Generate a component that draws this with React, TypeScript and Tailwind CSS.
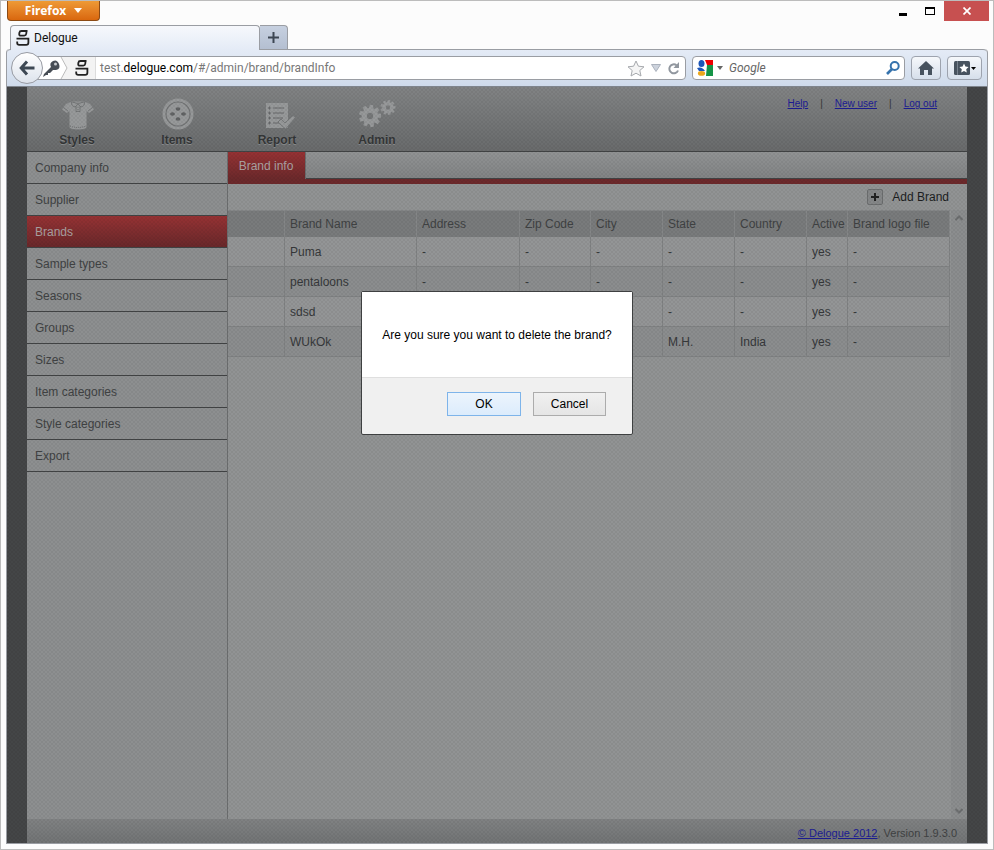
import React from "react";

const sidebarItems = [
  "Company info",
  "Supplier",
  "Brands",
  "Sample types",
  "Seasons",
  "Groups",
  "Sizes",
  "Item categories",
  "Style categories",
  "Export",
];

const columns = [
  { label: "", width: "w-[57px]" },
  { label: "Brand Name", width: "w-[132px]" },
  { label: "Address", width: "w-[103px]" },
  { label: "Zip Code", width: "w-[71px]" },
  { label: "City", width: "w-[72px]" },
  { label: "State", width: "w-[72px]" },
  { label: "Country", width: "w-[72px]" },
  { label: "Active", width: "w-[41px]" },
  { label: "Brand logo file", width: "w-[102px]" },
];

const rows = [
  ["", "Puma", "-", "-", "-", "-", "-", "yes", "-"],
  ["", "pentaloons", "-", "-", "-", "-", "-", "yes", "-"],
  ["", "sdsd", "", "", "", "-", "-", "yes", "-"],
  ["", "WUkOk", "", "", "", "M.H.", "India", "yes", "-"],
];

function DelogueMark() {
  return (
    <svg width="14" height="16" viewBox="0 0 14 16" fill="none" stroke="#222" strokeWidth="1.8">
      <path d="M11.5 1H5.5Q3.6 1 3.4 2.6L3.2 4.2Q3.2 5.6 5 5.6H8.2Q10 5.6 10.2 4L10.6 1" />
      <path d="M0.5 8.6H12.4V12.4Q12.4 14.8 10.2 14.8H3.2Q1.2 14.8 1.2 13V11.4" />
    </svg>
  );
}

function StylesIcon() {
  return (
    <svg width="32" height="30" viewBox="0 0 32 30">
      <path d="M9.5 1.5H22.5L28 4L32 9.5L27 13L24.5 11V27Q24 29.5 16 29.5T7.5 27V11L5 13L0 9.5L4 4Z" fill="#97999a" />
      <path d="M9.5 1.5Q9 6.5 13 7L16 4L19 7Q23 6.5 22.5 1.5M10 2Q16 5 22 2M1.5 7.5L6 11M30.5 7.5L26 11M14 6V11.5H18V6M16 7V8M16 9V10" fill="none" stroke="#6c6e70" strokeWidth="0.8" />
      <path d="M8 26Q16 29 24 26" fill="none" stroke="#66686a" strokeDasharray="1 1" />
    </svg>
  );
}

function ItemsIcon() {
  return (
    <svg width="32" height="32" viewBox="0 0 32 32">
      <circle cx="16" cy="16" r="15.5" fill="#97999a" />
      <circle cx="16" cy="16" r="12" fill="none" stroke="#737576" strokeWidth="1.2" />
      <g fill="#606263">
        <ellipse cx="16" cy="11" rx="2.4" ry="1.8" />
        <ellipse cx="16" cy="21" rx="2.4" ry="1.8" />
        <ellipse cx="10.5" cy="16" rx="2.4" ry="1.8" />
        <ellipse cx="21.5" cy="16" rx="2.4" ry="1.8" />
      </g>
    </svg>
  );
}

function ReportIcon() {
  return (
    <svg width="40" height="28" viewBox="-6 0 40 28">
      <path d="M2 1H24V26H2Z" fill="#97999a" />
      <path d="M4 6H7M4 11H7M4 16H7M4 21H7M5.5 4.5V7.5M5.5 9.5V12.5M5.5 14.5V17.5M5.5 19.5V22.5M9 6H20M9 11H20M9 16H19M9 21H15" stroke="#66686a" />
      <path d="M14 20L17 17L21 21L29 13.5L31.5 15.5L21.5 27Z" fill="#97999a" stroke="#6f7172" strokeWidth="0.8" />
    </svg>
  );
}

function Gear({ cx, cy, r }: { cx: number; cy: number; r: number }) {
  return (
    <g transform={`translate(${cx} ${cy}) scale(${r / 10})`}>
      <g fill="#97999a">
        {[0, 40, 80, 120, 160, 200, 240, 280, 320].map((a) => (
          <path key={a} d="M-2 -6L-1.6 -10H1.6L2 -6Z" transform={`rotate(${a + 8})`} />
        ))}
      </g>
      <circle r="5.2" fill="none" stroke="#97999a" strokeWidth="4.6" />
    </g>
  );
}

function AdminIcon() {
  return (
    <svg width="38" height="30" viewBox="0 0 38 30">
      <Gear cx={11} cy={16} r={11} />
      <Gear cx={29} cy={7.5} r={7.5} />
    </svg>
  );
}

const nav = [
  { label: "Styles", icon: <StylesIcon /> },
  { label: "Items", icon: <ItemsIcon /> },
  { label: "Report", icon: <ReportIcon /> },
  { label: "Admin", icon: <AdminIcon /> },
];

function TitleBar() {
  return (
    <div className="flex h-6 items-start justify-between pl-[6px] pr-1">
      <button className="flex h-5 w-[93px] items-center justify-center gap-2 rounded-b border border-t-0 border-[#8b4a14] bg-linear-to-b from-[#ee9a35] to-[#d9670d] font-['Noto_Sans',sans-serif] text-[12px] font-bold text-white">
        Firefox
        <svg width="8" height="5" viewBox="0 0 8 5"><path d="M0 0H8L4 5Z" fill="#fff" /></svg>
      </button>
      <div className="flex h-5">
        <button aria-label="Minimize" className="flex w-[26px] items-center justify-center pt-[6px]">
          <span className="h-[3px] w-2 bg-black" />
        </button>
        <button aria-label="Maximize" className="flex w-[28px] items-center justify-center">
          <span className="h-2 w-[10px] border border-t-2 border-black" />
        </button>
        <button aria-label="Close" className="flex w-[45px] items-center justify-center bg-[#c75050]">
          <svg width="8" height="8" viewBox="0 0 8 8" stroke="#fff" strokeWidth="1.7"><path d="M0.5 0.5L7.5 7.5M7.5 0.5L0.5 7.5" /></svg>
        </button>
      </div>
    </div>
  );
}

function TabStrip() {
  return (
    <div className="flex h-6 items-end pl-1">
      <div className="z-10 -mb-px flex h-[25px] w-[250px] items-center gap-1 rounded-t border border-b-0 border-[#9a9da3] bg-linear-to-b from-[#f6f8fc] to-[#e4ebf6] pl-[5px] font-['Roboto',sans-serif] text-[12px] text-[#111]">
        <DelogueMark />
        Delogue
      </div>
      <button aria-label="New tab" className="flex h-6 w-7 items-center justify-center rounded-tr border border-b-0 border-l-0 border-[#9a9da3] bg-linear-to-b from-[#c6d0e0] to-[#b4bfd1]">
        <svg width="11" height="11" viewBox="0 0 11 11" stroke="#3c4653" strokeWidth="2"><path d="M5.5 0V11M0 5.5H11" /></svg>
      </button>
    </div>
  );
}

function Toolbar() {
  return (
    <div className="flex h-[37px] items-center rounded-t border-t border-[#9a9da3] bg-linear-to-b from-[#e4ebf6] to-[#cfdbeb] pl-1 pr-[5px]">
      <button aria-label="Back" className="z-10 flex size-8 shrink-0 items-center justify-center rounded-full border border-[#989ba3] bg-linear-to-b from-white to-[#dde3ec]">
        <svg width="16" height="16" viewBox="0 0 16 16" fill="none" stroke="#3d4854" strokeWidth="3"><path d="M8 1.5L2.2 8L8 14.5M2 8H15.5" /></svg>
      </button>
      <div className="-ml-2 flex h-6 min-w-0 flex-1 items-center rounded-r-sm border border-[#9a9da3] bg-white">
        <div className="flex h-full w-[60px] shrink-0 items-center border-r border-[#dcdcdc] bg-[#f3f3f3]">
          <svg width="33" height="22" viewBox="0 0 33 22">
            <path d="M0 0H25L31 11L25 22H0Z" fill="#fff" />
            <path d="M25 0L31 11L25 22" fill="none" stroke="#bbb" />
            <path d="M7 20L8 17L15 10Q13 6 17 4T23 7T20 13L17 13L14 16H12V18H10Z" fill="#474d55" />
            <circle cx="19.5" cy="7" r="1.5" fill="#c9ccd0" />
          </svg>
          <span className="ml-[6px]"><DelogueMark /></span>
        </div>
        <div className="ml-1 min-w-0 flex-1 font-['Roboto',sans-serif] text-[12px] text-[#777]">
          test.<span className="text-black">delogue.com</span>/#/admin/brand/brandInfo
        </div>
        <div className="flex items-center gap-[6px] pr-[5px]">
          <svg width="18" height="17" viewBox="0 0 18 17" fill="#f5f5f5" stroke="#a6a9ad"><path d="M9 1L11.4 6.2L17 6.8L12.8 10.5L14 16L9 13.2L4 16L5.2 10.5L1 6.8L6.6 6.2Z" /></svg>
          <svg width="10" height="8" viewBox="0 0 10 8"><path d="M0.5 0.5H9.5L5 7.5Z" fill="#cdd3dd" stroke="#abb2bd" /></svg>
          <svg width="13" height="13" viewBox="0 0 13 13"><path d="M9.5 3.2A4.5 4.5 0 1 0 11 8.5" fill="none" stroke="#91979f" strokeWidth="2" /><path d="M12 0V6H6.5Z" fill="#91979f" /></svg>
        </div>
      </div>
      <div className="ml-[6px] flex h-6 w-[213px] items-center rounded-sm border border-[#9a9da3] bg-white pl-1 pr-1">
        <svg width="16" height="16" viewBox="0 0 16 16">
          <path d="M8 0H16V5H10Z" fill="#e00" />
          <path d="M10 5H16V16H9Z" fill="#159447" />
          <ellipse cx="4.5" cy="3.5" rx="3" ry="3.5" fill="#1c56b8" />
          <path d="M0 8Q5 6 8 11L2 11Z" fill="#1c56b8" />
          <ellipse cx="4.5" cy="13.4" rx="3.6" ry="2.4" fill="#eca71c" />
        </svg>
        <svg className="ml-1" width="6" height="4" viewBox="0 0 6 4"><path d="M0 0H6L3 4Z" fill="#666" /></svg>
        <input aria-label="Search" placeholder="Google" className="ml-[6px] min-w-0 flex-1 bg-transparent font-['Roboto',sans-serif] text-[12px] italic outline-none placeholder:text-[#666]" />
        <svg width="14" height="14" viewBox="0 0 14 14" fill="none" stroke="#3673ad" strokeWidth="2"><circle cx="8.7" cy="5" r="4" /><path d="M6 8L1 13" strokeWidth="2.6" /></svg>
      </div>
      <button aria-label="Home" className="ml-[6px] flex h-6 w-[30px] items-center justify-center rounded-sm border border-[#9da3ae] bg-linear-to-b from-[#f6f8fb] to-[#d6dfeb]">
        <svg width="16" height="14" viewBox="0 0 16 14" fill="#47525e"><path d="M8 0L16 7.5H14V14H10V9H6V14H2V7.5H0Z" /></svg>
      </button>
      <button aria-label="Bookmarks" className="ml-[6px] flex h-6 w-[35px] items-center justify-center gap-px rounded-sm border border-[#9da3ae] bg-linear-to-b from-[#f6f8fb] to-[#d6dfeb]">
        <svg width="16" height="14" viewBox="0 0 16 14"><rect width="16" height="14" rx="1.5" fill="#47525e" /><path d="M3.5 0V14" stroke="#77818d" /><path d="M10 2.5L11.4 5.6L14.6 6L12.2 8.2L12.8 11.5L10 9.9L7.2 11.5L7.8 8.2L5.4 6L8.6 5.6Z" fill="#fff" /></svg>
        <svg width="5" height="3" viewBox="0 0 5 3"><path d="M0 0H5L2.5 3Z" /></svg>
      </button>
    </div>
  );
}

function AppHeader() {
  return (
    <header className="flex h-[65px] items-start justify-between border-b border-[#414344] bg-linear-to-b from-[#818384] to-[#696b6c] pr-[30px]">
      <nav className="flex">
        {nav.map((item) => (
          <a key={item.label} href="#" className="flex w-[100px] flex-col items-center gap-[2px] text-[12px] font-bold leading-4 text-[#343637] [text-shadow:0_1px_0_#8a8c8d]">
            <span className="flex h-[43px] items-end justify-center pl-[2px]">{item.icon}</span>
            {item.label}
          </a>
        ))}
      </nav>
      <div className="flex gap-3 pt-[9px] text-[10px] leading-4 text-[#343637]">
        <a href="#" className="text-[#1c1c94] underline">Help</a>
        <span>|</span>
        <a href="#" className="text-[#1c1c94] underline">New user</a>
        <span>|</span>
        <a href="#" className="text-[#1c1c94] underline">Log out</a>
      </div>
    </header>
  );
}

function Sidebar() {
  return (
    <aside className="w-[201px] shrink-0 border-r border-[#6c6e6f] bg-[#8d8f90]">
      {sidebarItems.map((item) => (
        <a
          key={item}
          href="#"
          className={
            item === "Brands"
              ? "flex h-8 items-center border-b border-[#414344] bg-linear-to-b from-[#963234] to-[#69282a] pl-2 text-[#a9a0a0]"
              : "flex h-8 items-center border-b border-[#414344] pl-2 text-[#404243]"
          }
        >
          {item}
        </a>
      ))}
    </aside>
  );
}

function BrandTable() {
  return (
    <table className="table-fixed border-separate border-spacing-0 text-left text-[#36383a]">
      <thead>
        <tr className="h-[27px] bg-[#797b7c] text-[#404243]">
          {columns.map((col) => (
            <th key={col.label} className={`${col.width} whitespace-nowrap border-r border-t border-[#858788] p-0 pl-[5px] font-normal`}>
              {col.label}
            </th>
          ))}
        </tr>
      </thead>
      <tbody>
        {rows.map((row, r) => (
          <tr key={row[1]} className={r % 2 ? "h-[30px] bg-[#8b8d8e]" : "h-[30px] bg-[#939596]"}>
            {row.map((cell, c) => (
              <td key={c} className="border-b border-r border-[#808283] p-0 pl-[5px]">{cell}</td>
            ))}
          </tr>
        ))}
      </tbody>
    </table>
  );
}

function Content() {
  return (
    <main className="flex min-w-0 flex-1 flex-col bg-[#919394]">
      <div className="flex h-8 items-stretch border-b-[5px] border-[#6c292b] bg-linear-to-b from-[#919394] to-[#818384]">
        <button className="w-[78px] border-r border-[#6c6e6f] bg-linear-to-b from-[#963234] to-[#6c292b] pr-px text-[#aaa2a2]">Brand info</button>
        <div className="flex-1 border-b border-[#414344]" />
      </div>
      <div className="flex h-[26px] items-center justify-end pr-[18px]">
        <button className="flex items-center gap-[9px] text-[#1c1e1f]">
          <span className="flex size-4 items-center justify-center rounded-xs border border-[#6c6e6f] bg-[#858788]">
            <svg width="8" height="8" viewBox="0 0 8 8" stroke="#222" strokeWidth="2"><path d="M4 0V8M0 4H8" /></svg>
          </span>
          Add Brand
        </button>
      </div>
      <div className="flex flex-1 items-stretch justify-between">
        <div><BrandTable /></div>
        <div className="flex w-4 flex-col items-center justify-between bg-[#8b8d8e] py-[5px]">
          <svg width="8" height="6" viewBox="0 0 8 6" fill="none" stroke="#6d6f70" strokeWidth="2"><path d="M0.5 5L4 1.5L7.5 5" /></svg>
          <svg width="8" height="6" viewBox="0 0 8 6" fill="none" stroke="#6d6f70" strokeWidth="2"><path d="M0.5 1L4 4.5L7.5 1" /></svg>
        </div>
      </div>
    </main>
  );
}

function ConfirmDialog() {
  return (
    <div role="dialog" aria-label="Delete brand" className="absolute left-1/2 top-[204px] h-36 w-[272px] -translate-x-1/2 rounded-xs border border-[#3e4041] bg-[#f0f0f0] text-black">
      <div className="flex h-[86px] items-center justify-center whitespace-nowrap border-b border-[#dfdfdf] bg-white">
        Are you sure you want to delete the brand?
      </div>
      <div className="flex justify-end gap-3 pr-[26px] pt-[14px]">
        <button className="h-6 w-[74px] border border-[#7eb4ea] bg-linear-to-b from-[#ecf4fc] to-[#dcecfc]">OK</button>
        <button className="h-6 w-[73px] border border-[#acacac] bg-linear-to-b from-[#f0f0f0] to-[#e5e5e5]">Cancel</button>
      </div>
    </div>
  );
}

export default function App() {
  return (
    <div className="flex h-screen flex-col border border-[#bcbcbc] bg-[#fcfcfc]">
      <TitleBar />
      <div className="flex min-h-0 flex-1 flex-col px-[5px] pb-[5px]">
        <TabStrip />
        <div className="flex min-h-0 flex-1 flex-col rounded-t border border-t-0 border-[#9a9da3]">
          <Toolbar />
          <div className="relative flex min-h-0 flex-1 flex-col border-t border-[#7f858d] bg-[#444647] px-5 font-['Liberation_Sans',Arial,sans-serif] text-[12px]">
            <AppHeader />
            <div className="flex min-h-0 flex-1">
              <Sidebar />
              <Content />
            </div>
            <footer className="flex h-6 items-center justify-end bg-linear-to-b from-[#808283] to-[#727475] pr-[10px] pt-1 text-[11px] text-[#404243]">
              <a href="#" className="text-[#1c1c94] underline">© Delogue 2012</a>, Version 1.9.3.0
            </footer>
            <div className="pointer-events-none absolute inset-0 bg-[radial-gradient(circle_at_1px_1px,rgba(0,0,0,0.05)_1px,transparent_1px),radial-gradient(circle_at_3px_3px,rgba(0,0,0,0.05)_1px,transparent_1px)] bg-[size:4px_4px]" />
            <ConfirmDialog />
          </div>
        </div>
      </div>
    </div>
  );
}
